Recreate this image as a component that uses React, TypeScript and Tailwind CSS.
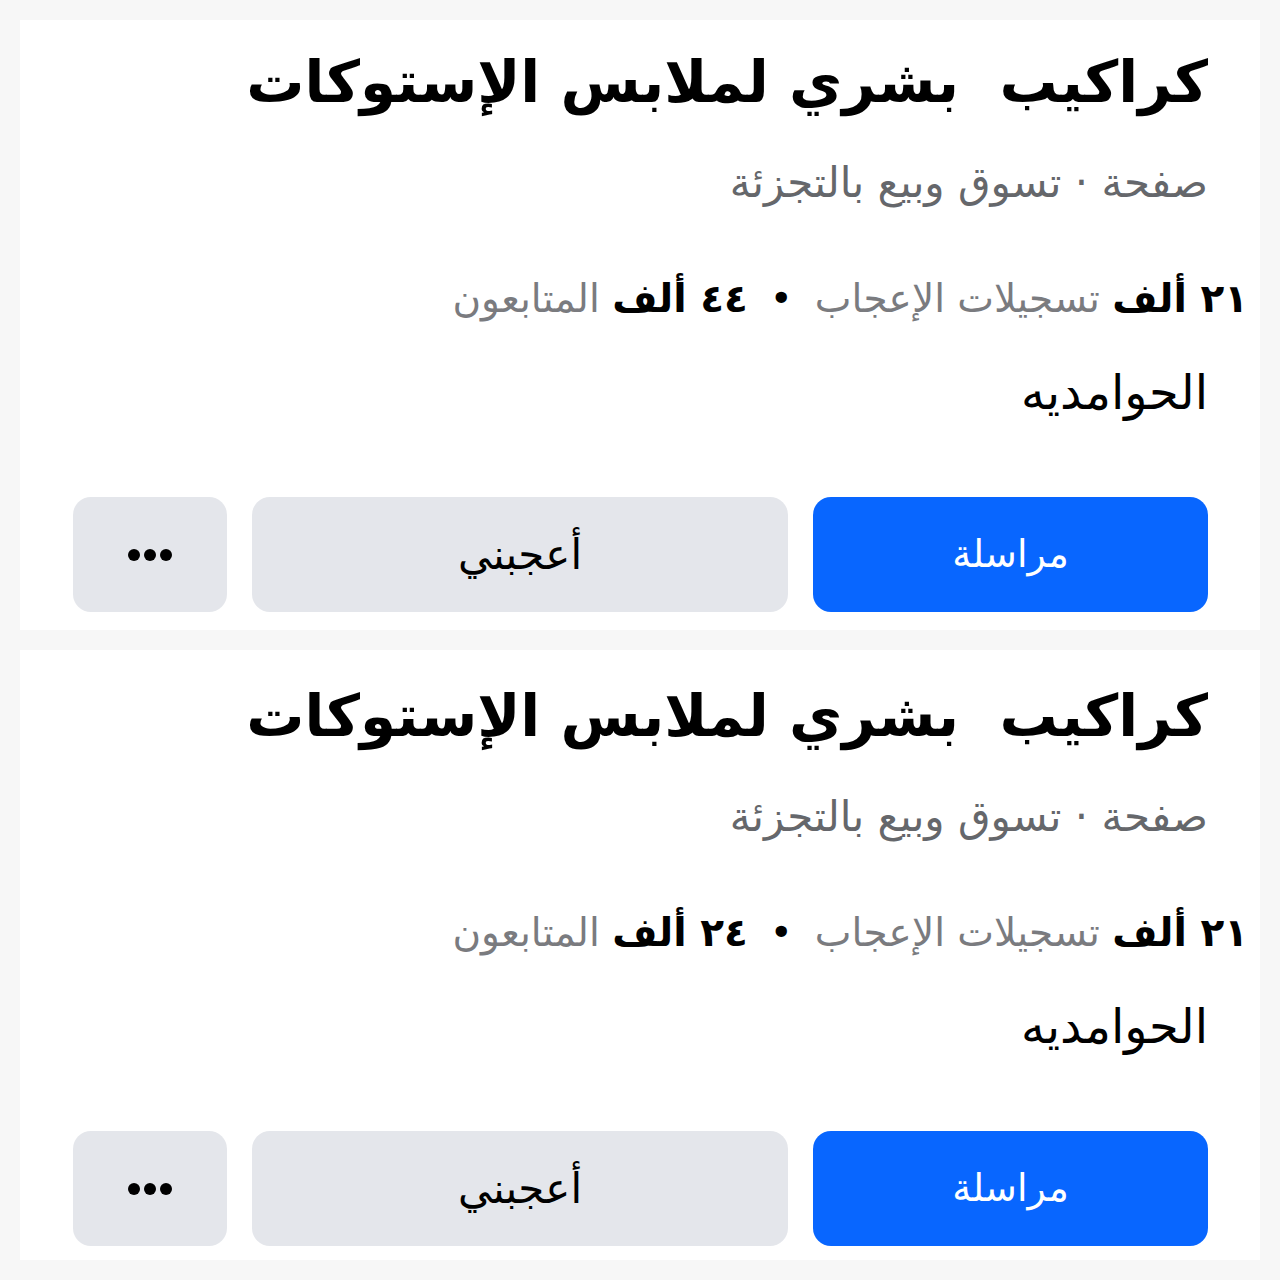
const font = { fontFamily: '"DejaVu Sans", "Noto Sans", sans-serif' };

type PageCard = { likes: string; followers: string; shifted?: boolean };

const cards: PageCard[] = [
  { likes: "٢١", followers: "٤٤" },
  { likes: "٢١", followers: "٢٤", shifted: true },
];

function Card({ likes, followers, shifted }: PageCard) {
  return (
    <div
      className={`bg-white w-[1240px] h-[610px] pr-[52px] pl-[52px] ${shifted ? "pt-[26px]" : "pt-[22px]"}`}
      dir="rtl"
    >
      <h1 className="text-[58px] leading-[80px] font-bold text-black whitespace-pre">
        كراكيب  بشري لملابس الإستوكات
      </h1>
      <div className="mt-[36px] text-[42px] leading-[50px] text-[#65676b]">
        صفحة · تسوق وبيع بالتجزئة
      </div>
      <div className="mt-[66px] -mr-[40px] text-[39px] leading-[50px] text-[#7a7b7f]">
        <span className="font-bold text-black">{likes} ألف</span> تسجيلات الإعجاب
        <span className="mx-[22px] text-black">•</span>
        <span className="font-bold text-black">{followers} ألف</span> المتابعون
      </div>
      <div className="mt-[40px] text-[48px] leading-[56px] text-black">الحوامديه</div>
      <div className="mt-[77px] flex gap-[25px]">
        <button className="w-[395px] h-[115px] rounded-[18px] bg-[#0866ff] text-white text-[38px]">
          مراسلة
        </button>
        <button className="w-[536px] h-[115px] rounded-[18px] bg-[#e4e6eb] text-black text-[42px]">
          أعجبني
        </button>
        <button className="w-[154px] h-[115px] rounded-[18px] bg-[#e4e6eb] flex items-center justify-center gap-[4px]">
          <span className="w-[12px] h-[12px] rounded-full bg-black" />
          <span className="w-[12px] h-[12px] rounded-full bg-black" />
          <span className="w-[12px] h-[12px] rounded-full bg-black" />
        </button>
      </div>
    </div>
  );
}

export default function App() {
  return (
    <div className="w-[1280px] h-[1280px] bg-[#f7f7f7] pt-[20px] pl-[20px] flex flex-col gap-[20px]" style={font}>
      {cards.map((c, i) => (
        <Card key={i} {...c} />
      ))}
    </div>
  );
}
